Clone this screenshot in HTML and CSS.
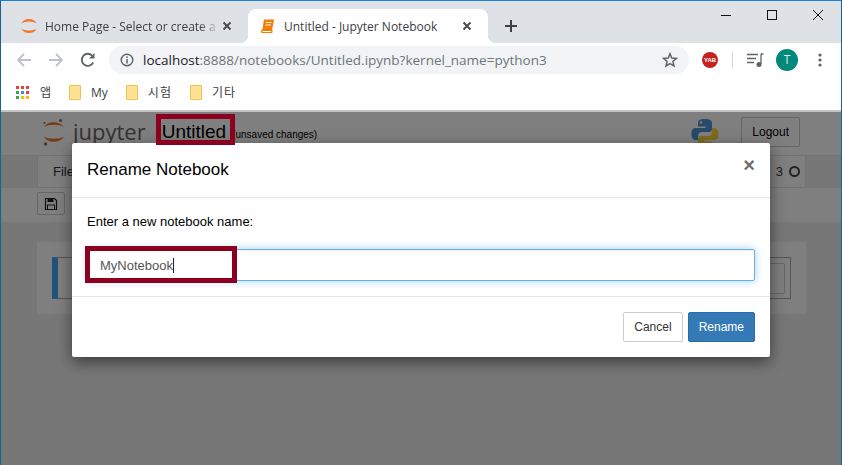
FILE: index.html
```html
<!DOCTYPE html>
<html lang="en">
<head>
    <meta charset="UTF-8">
    <title>Untitled - Jupyter Notebook</title>
    <link rel="stylesheet" href="styles.css">
</head>
<body>
<div class="window">
    <div class="tabstrip">
        <div class="tab">
            <svg class="tab-icon" width="16" height="16" viewBox="0 0 16 16"><path d="M0.500 5.500C2.500 -0.500 13.500 -0.500 15.500 5.500C12 2.800 4 2.800 0.500 5.500Z" fill="#f37726"/><path d="M0.500 10.500C2.500 16.500 13.500 16.500 15.500 10.500C12 13.200 4 13.200 0.500 10.500Z" fill="#f37726"/></svg>
            <span class="tab-title faded">Home Page - Select or create a</span>
            <svg class="tab-close" width="10" height="10" viewBox="0 0 10 10"><path d="M1.500 1.500L8.500 8.500M8.500 1.500L1.500 8.500" stroke="#45484c" stroke-width="1.800"/></svg>
        </div>
        <div class="tab active">
            <svg class="tab-icon" width="16" height="16" viewBox="0 0 16 16"><path d="M4 1.500H14L12 12.500H2.200Z" fill="#f57c00"/><path d="M2.200 12.500H12L11.700 14.500H2.500C1.200 14.500 1.200 12.500 2.200 12.500Z" fill="#fff" stroke="#f57c00" stroke-width="1.200"/><path d="M6 4.500H11.500M5.600 7H11" stroke="#fff" stroke-width="1.100"/></svg>
            <span class="tab-title">Untitled - Jupyter Notebook</span>
            <svg class="tab-close" width="10" height="10" viewBox="0 0 10 10"><path d="M1.500 1.500L8.500 8.500M8.500 1.500L1.500 8.500" stroke="#45484c" stroke-width="1.800"/></svg>
        </div>
        <svg class="new-tab" width="14" height="14" viewBox="0 0 14 14"><path d="M7 1V13M1 7H13" stroke="#3c4043" stroke-width="2"/></svg>
        <div class="window-controls">
            <svg width="12" height="12" viewBox="0 0 12 12"><path d="M1 6.500H11" stroke="#111" stroke-width="1"/></svg>
            <svg width="12" height="12" viewBox="0 0 12 12"><rect x="1.500" y="1.500" width="9" height="9" fill="none" stroke="#111"/></svg>
            <svg width="12" height="12" viewBox="0 0 12 12"><path d="M1 1L11 11M11 1L1 11" stroke="#111" stroke-width="1"/></svg>
        </div>
    </div>

    <div class="toolbar">
        <svg class="nav-icon" width="16" height="16" viewBox="0 0 16 16"><path d="M15 8H2M8 2L2 8L8 14" fill="none" stroke="#bdc1c6" stroke-width="1.800"/></svg>
        <svg class="nav-icon" width="16" height="16" viewBox="0 0 16 16"><path d="M1 8H14M8 2L14 8L8 14" fill="none" stroke="#bdc1c6" stroke-width="1.800"/></svg>
        <svg class="nav-icon" width="16" height="16" viewBox="0 0 16 16"><path d="M13.200 10.500A6 6 0 1 1 12.300 3.800" fill="none" stroke="#5f6368" stroke-width="1.900"/><path d="M14.500 1V6.500H9Z" fill="#5f6368"/></svg>
        <div class="omnibox">
            <svg width="14" height="14" viewBox="0 0 14 14"><circle cx="7" cy="7" r="5.800" fill="none" stroke="#5f6368" stroke-width="1.400"/><path d="M7 6V10.500M7 3.500V5" stroke="#5f6368" stroke-width="1.500"/></svg>
            <span class="url"><b>localhost</b>:8888/notebooks/Untitled.ipynb?kernel_name=python3</span>
            <svg class="star" width="16" height="16" viewBox="0 0 16 16"><path d="M8 1.800L9.800 6L14.400 6.400L10.900 9.400L12 13.900L8 11.500L4 13.900L5.100 9.400L1.600 6.400L6.200 6Z" fill="none" stroke="#5f6368" stroke-width="1.500"/></svg>
        </div>
        <div class="yab">YAB</div>
        <div class="tool-sep"></div>
        <svg class="playlist" width="17" height="16" viewBox="0 0 17 16"><path d="M0 2.500H11M0 6.500H9M0 10.500H7" stroke="#5f6368" stroke-width="1.300"/><path d="M14 2V12" stroke="#5f6368" stroke-width="1.300"/><path d="M14 2H16.500" stroke="#5f6368" stroke-width="1.500"/><circle cx="12" cy="12.500" r="2.500" fill="#5f6368"/></svg>
        <div class="avatar">T</div>
        <svg class="dots" width="4" height="14" viewBox="0 0 4 14"><circle cx="2" cy="2" r="1.600" fill="#5f6368"/><circle cx="2" cy="7" r="1.600" fill="#5f6368"/><circle cx="2" cy="12" r="1.600" fill="#5f6368"/></svg>
    </div>

    <div class="bookmarks">
        <div class="bookmark apps-link">
            <svg width="13" height="13" viewBox="0 0 13 13">
                <rect width="3" height="3" fill="#ea4335"/><rect x="5" width="3" height="3" fill="#ea4335"/><rect x="10" width="3" height="3" fill="#ea4335"/>
                <rect y="5" width="3" height="3" fill="#34a853"/><rect x="5" y="5" width="3" height="3" fill="#4285f4"/><rect x="10" y="5" width="3" height="3" fill="#ea4335"/>
                <rect y="10" width="3" height="3" fill="#34a853"/><rect x="5" y="10" width="3" height="3" fill="#fbbc05"/><rect x="10" y="10" width="3" height="3" fill="#fbbc05"/>
            </svg>
            <span>앱</span>
        </div>
        <div class="bookmark"><i class="folder"></i><span>My</span></div>
        <div class="bookmark"><i class="folder"></i><span class="ko">시험</span></div>
        <div class="bookmark"><i class="folder"></i><span class="ko">기타</span></div>
    </div>

    <div class="page">
        <div class="nb-header">
            <svg class="nb-logo" width="24" height="30" viewBox="0 0 24 30">
                <path d="M2 8C5 1.500 18 1.500 22 8C18 5 6 5 2 8Z" fill="#f37726"/>
                <path d="M2 17.500C5 24.500 18 24.500 22 17.500C18 20.500 6 20.500 2 17.500Z" fill="#f37726"/>
                <circle cx="18.500" cy="1.500" r="1.500" fill="#767677"/><circle cx="2.500" cy="4" r="1" fill="#767677"/><circle cx="3.500" cy="25" r="1.800" fill="#767677"/>
            </svg>
            <span class="nb-brand">jupyter</span>
            <span class="nb-name">Untitled</span>
            <span class="nb-status">(unsaved changes)</span>
            <svg class="py-logo" width="28" height="32" viewBox="0 0 28 32">
                <path d="M14 1C8 1 7 3 7 5V8.500H14.500V10H4C1.500 10 0.500 13 0.500 16C0.500 19.500 2 22 4 22H7V18C7 15.500 9 14 11 14H18C20 14 21 12.500 21 11V5C21 3 19 1 14 1Z" fill="#4f94d4"/>
                <circle cx="10" cy="4.500" r="1.300" fill="#fff"/>
                <path d="M14 31C20 31 21 29 21 27V23.500H13.500V22H24C26.500 22 27.500 19 27.500 16C27.500 12.500 26 10 24 10H21V14C21 16.500 19 18 17 18H10C8 18 7 19.500 7 21V27C7 29 9 31 14 31Z" fill="#ffd43b"/>
            </svg>
            <div class="logout">Logout</div>
        </div>

        <div class="nb-menubar">
            <span>File</span>
            <span class="kernel">3<i class="kernel-dot"></i></span>
        </div>

        <div class="nb-tools">
            <div class="tool-btn">
                <svg width="14" height="14" viewBox="0 0 14 14"><path d="M1.500 1.500H10.500L12.500 3.500V12.500H1.500Z" fill="none" stroke="#222" stroke-width="1.200"/><path d="M3.500 1.500H9.500V5H3.500Z" fill="#222"/><rect x="3.500" y="8" width="7" height="4.500" fill="none" stroke="#222"/></svg>
            </div>
        </div>

        <div class="nb-area">
            <div class="nb-container">
                <div class="cell">
                    <div class="cell-input"></div>
                </div>
            </div>
        </div>

        <div class="backdrop"></div>
    </div>

    <div class="modal">
        <div class="modal-header">
            <h4>Rename Notebook</h4>
            <span class="modal-close">×</span>
        </div>
        <div class="modal-body">
            <p>Enter a new notebook name:</p>
            <div class="name-input">MyNotebook<i class="caret"></i></div>
        </div>
        <div class="modal-footer">
            <div class="btn">Cancel</div>
            <div class="btn btn-primary">Rename</div>
        </div>
    </div>

    <div class="mark mark-title"></div>
    <div class="mark mark-input"></div>
</div>
</body>
</html>
```

FILE: styles.css
```css
html, body {
    margin: 0;
    padding: 0;
    height: 100%;
    overflow: hidden;
}
body {
    font-family: "Liberation Sans", Arial, sans-serif;
    background-color: #fff;
}
.window {
    position: relative;
    width: 842px;
    height: 465px;
    box-sizing: border-box;
    border-top: 1px solid #1a82d2;
    border-left: 1px solid #17638f;
    border-right: 1px solid #17638f;
    overflow: hidden;
}

/* browser chrome */
.tabstrip {
    position: relative;
    height: 42px;
    display: flex;
    align-items: flex-end;
    background-color: #dee1e6;
    font-family: "Open Sans", "Noto Sans", sans-serif;
}
.tab {
    width: 247px;
    height: 34px;
    box-sizing: border-box;
    display: flex;
    align-items: center;
    padding: 0 16px 0 20px;
    font-size: 12px;
    color: #3c4043;
}
.tab.active {
    position: relative;
    width: 240px;
    padding: 0 16px 0 12px;
    background-color: #fff;
    border-radius: 8px 8px 0 0;
}
.tab.active::before,
.tab.active::after {
    content: "";
    position: absolute;
    bottom: 0;
    width: 8px;
    height: 8px;
}
.tab.active::before {
    left: -8px;
    background: radial-gradient(circle at 0 0, #dee1e6 8px, #fff 8.5px);
}
.tab.active::after {
    right: -8px;
    background: radial-gradient(circle at 100% 0, #dee1e6 8px, #fff 8.5px);
}
.tab-icon {
    flex: none;
    margin-right: 8px;
}
.tab-title {
    flex: 1;
    white-space: nowrap;
    overflow: hidden;
}
.tab-title.faded {
    -webkit-mask-image: linear-gradient(to right, #000 155px, transparent 175px);
}
.tab-close {
    flex: none;
}
.new-tab {
    margin: 0 0 10px 16px;
}
.window-controls {
    position: absolute;
    top: 8px;
    right: 17px;
    display: flex;
    gap: 34px;
}
.toolbar {
    height: 33px;
    display: flex;
    align-items: center;
    padding-left: 15px;
    background-color: #fff;
}
.nav-icon {
    margin-right: 16px;
}
.omnibox {
    width: 580px;
    height: 28px;
    box-sizing: border-box;
    margin-left: -3px;
    padding: 0 11px;
    display: flex;
    align-items: center;
    gap: 9px;
    border-radius: 14px;
    background-color: #f1f3f4;
}
.url {
    flex: 1;
    font-family: "Open Sans", "Noto Sans", sans-serif;
    font-size: 13.500px;
    color: #70757a;
    white-space: nowrap;
}
.url b {
    font-weight: normal;
    color: #202124;
}
.yab {
    width: 16px;
    height: 16px;
    margin-left: 13px;
    border-radius: 50%;
    background-color: #c5221f;
    color: #fff;
    font-size: 6px;
    font-weight: bold;
    line-height: 16px;
    text-align: center;
}
.tool-sep {
    width: 1px;
    height: 16px;
    margin-left: 14px;
    background-color: #d0d3d6;
}
.playlist {
    margin-left: 14px;
}
.avatar {
    width: 22px;
    height: 22px;
    margin-left: 12px;
    border-radius: 50%;
    background-color: #00897b;
    color: #d7efec;
    font-family: "Open Sans", sans-serif;
    font-size: 12px;
    line-height: 22px;
    text-align: center;
}
.dots {
    margin-left: 20px;
}
.bookmarks {
    height: 36px;
    display: flex;
    align-items: center;
    padding: 0 0 2px 15px;
    background-color: #fff;
    border-bottom: 2px solid #c4c4c4;
    box-sizing: border-box;
    font-family: "Open Sans", "Noto Sans CJK KR", sans-serif;
    font-size: 12px;
    color: #3c4043;
}
.bookmark {
    display: flex;
    align-items: center;
    gap: 10px;
    margin-right: 18px;
}
.apps-link {
    gap: 11px;
}
.ko {
    letter-spacing: 1px;
}
.folder {
    display: block;
    width: 10px;
    height: 13px;
    background-color: #fde293;
    border: 1px solid #eec44e;
    border-radius: 1px;
}

/* notebook page under the backdrop */
.page {
    position: relative;
    height: 353px;
    background-color: #eee;
    overflow: hidden;
}
.nb-header {
    height: 44px;
    box-sizing: border-box;
    display: flex;
    align-items: center;
    padding: 0 41px 0 41px;
    background-color: #fff;
    border-bottom: 1px solid #e7e7e7;
}
.nb-logo {
    flex: none;
}
.nb-brand {
    margin: -6px 0 0 7px;
    font-family: "Open Sans", sans-serif;
    font-size: 22px;
    color: #666;
}
.nb-name {
    margin: -4px 0 0 16px;
    font-size: 19px;
    color: #000;
}
.nb-status {
    margin: 2px 0 0 6px;
    font-size: 10px;
    color: #000;
}
.py-logo {
    flex: none;
    margin: 0 0 0 auto;
}
.logout {
    margin: 0 0 3px 22px;
    padding: 0 10px;
    height: 30px;
    box-sizing: border-box;
    border: 1px solid #ccc;
    border-radius: 2px;
    font-size: 12px;
    line-height: 28px;
    color: #000;
}
.nb-menubar {
    height: 32px;
    box-sizing: border-box;
    margin: 0 35px 0 36px;
    padding: 0 5px 0 15px;
    display: flex;
    align-items: center;
    justify-content: space-between;
    background-color: #fff;
    border: 1px solid #e7e7e7;
    border-top: 0;
    font-size: 13px;
    color: #333;
}
.kernel {
    display: flex;
    align-items: center;
    gap: 6px;
}
.kernel-dot {
    width: 7px;
    height: 7px;
    border: 2px solid #444;
    border-radius: 50%;
}
.nb-tools {
    height: 34px;
    padding: 4px 36px 0;
    box-sizing: border-box;
    background-color: #fff;
}
.tool-btn {
    width: 28px;
    height: 23px;
    box-sizing: border-box;
    display: flex;
    align-items: center;
    justify-content: center;
    border: 1px solid #ccc;
    border-radius: 2px;
}
.nb-area {
    padding: 20px 35px 0 36px;
}
.nb-container {
    height: 72px;
    box-sizing: border-box;
    padding: 15px;
    background-color: #fff;
}
.cell {
    height: 42px;
    box-sizing: border-box;
    padding: 5px 5px 5px 0;
    border: 1px solid #ababab;
    border-left: 6px solid #42a5f5;
}
.cell-input {
    height: 29px;
    margin-left: 60px;
    border: 1px solid #cfcfcf;
    border-radius: 2px;
}
.backdrop {
    position: absolute;
    top: 0;
    right: 0;
    bottom: 0;
    left: 0;
    background-color: rgba(0, 0, 0, 0.5);
}

/* rename dialog */
.modal {
    position: absolute;
    top: 142px;
    left: 71px;
    width: 698px;
    height: 214px;
    display: flex;
    flex-direction: column;
    background-color: #fff;
    border-radius: 2px;
    box-shadow: 0 5px 15px rgba(0, 0, 0, 0.5);
}
.modal-header {
    height: 55px;
    box-sizing: border-box;
    display: flex;
    align-items: center;
    justify-content: space-between;
    padding: 0 15px;
    border-bottom: 1px solid #e5e5e5;
}
.modal-header h4 {
    margin: 0;
    font-size: 17px;
    font-weight: normal;
    color: #000;
}
.modal-close {
    margin: -10px 0 0;
    font-size: 20px;
    font-weight: bold;
    color: #6e6e6e;
}
.modal-body {
    height: 99px;
    box-sizing: border-box;
    padding: 16px 15px 0;
    border-bottom: 1px solid #e5e5e5;
}
.modal-body p {
    margin: 0 0 20px;
    font-size: 13px;
    line-height: 15px;
    color: #000;
}
.name-input {
    height: 32px;
    box-sizing: border-box;
    padding: 0 12px;
    display: flex;
    align-items: center;
    border: 1px solid #66afe9;
    border-radius: 2px;
    box-shadow: inset 0 1px 1px rgba(0, 0, 0, 0.075), 0 0 8px rgba(102, 175, 233, 0.6);
    font-size: 13px;
    color: #555;
}
.caret {
    width: 1px;
    height: 15px;
    background-color: #222;
}
.modal-footer {
    flex: 1;
    display: flex;
    justify-content: flex-end;
    align-items: flex-start;
    gap: 5px;
    padding: 15px 15px 0;
}
.btn {
    height: 30px;
    box-sizing: border-box;
    padding: 0 10px;
    border: 1px solid #ccc;
    border-radius: 2px;
    font-size: 12px;
    line-height: 28px;
    color: #333;
}
.btn-primary {
    background-color: #337ab7;
    border-color: #2e6da4;
    color: #fff;
}

/* red annotation boxes */
.mark {
    position: absolute;
    box-sizing: border-box;
    border: 5px solid #8c001f;
}
.mark-title {
    top: 113px;
    left: 155px;
    width: 79px;
    height: 31px;
}
.mark-input {
    top: 245px;
    left: 84px;
    width: 152px;
    height: 37px;
}
```
